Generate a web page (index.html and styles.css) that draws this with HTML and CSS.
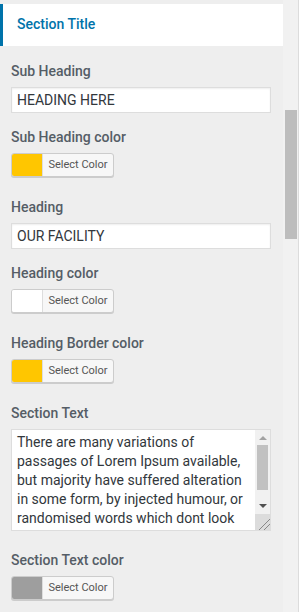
FILE: index.html
```html
<!DOCTYPE html>
<html lang="en">
<head>
    <meta charset="UTF-8">
    <meta name="viewport" content="width=device-width, initial-scale=1.0">
    <title>Section Settings</title>
    <link rel="stylesheet" href="styles.css">
</head>
<body>

    <div class="panel">
        <div class="section-head">
            <h3>Section Title</h3>
        </div>

        <div class="controls">
            <div class="field">
                <label>Sub Heading</label>
                <input type="text" class="text-input" value="HEADING HERE">
            </div>

            <div class="field color-field">
                <label>Sub Heading color</label>
                <button class="color-btn"><span class="swatch yellow"></span><span class="btn-text">Select Color</span></button>
            </div>

            <div class="field">
                <label>Heading</label>
                <input type="text" class="text-input" value="OUR FACILITY">
            </div>

            <div class="field color-field">
                <label>Heading color</label>
                <button class="color-btn"><span class="swatch white"></span><span class="btn-text">Select Color</span></button>
            </div>

            <div class="field color-field">
                <label>Heading Border color</label>
                <button class="color-btn"><span class="swatch yellow"></span><span class="btn-text">Select Color</span></button>
            </div>

            <div class="field area-field">
                <label>Section Text</label>
                <div class="textarea">
                    <div class="ta-text">There are many variations of passages of Lorem Ipsum available, but majority have suffered alteration in some form, by injected humour, or randomised words which dont look even slightly believable.</div>
                    <div class="ta-scroll">
                        <span class="arrow-up"></span>
                        <span class="ta-thumb"></span>
                        <span class="arrow-down"></span>
                        <span class="resizer"></span>
                    </div>
                </div>
            </div>

            <div class="field color-field">
                <label>Section Text color</label>
                <button class="color-btn"><span class="swatch grey"></span><span class="btn-text">Select Color</span></button>
            </div>
        </div>
    </div>

    <div class="page-scroll">
        <div class="page-thumb"></div>
    </div>

</body>
</html>
```

FILE: styles.css
```css
body {
    font-family: Roboto, "Liberation Sans", sans-serif;
    margin: 0;
    padding: 0;
    display: flex;
    height: 612px;
    overflow: hidden;
    background-color: #eeeeee;
}
.panel {
    width: 283px;
    flex-shrink: 0;
}
.section-head {
    margin-top: 4px;
    height: 42px;
    box-sizing: border-box;
    background-color: #ffffff;
    border-left: 3px solid #0073aa;
    padding: 11px 0 0 14px;
}
.section-head h3 {
    margin: 0;
    font-size: 14px;
    line-height: 18px;
    font-weight: 500;
    color: #0073aa;
}
.controls {
    padding: 16px 12px 0 11px;
}
.field {
    margin-bottom: 15px;
}
.field label {
    display: block;
    font-size: 14px;
    line-height: 18px;
    font-weight: 500;
    color: #555d66;
    margin-bottom: 7px;
}
.color-field {
    margin-bottom: 21px;
}
.area-field {
    margin-bottom: 20px;
}
.text-input {
    display: block;
    width: 100%;
    height: 26px;
    box-sizing: border-box;
    border: 1px solid #dddddd;
    box-shadow: inset 0 1px 2px rgba(0, 0, 0, 0.07);
    background-color: #ffffff;
    padding: 0 5px;
    margin: 0;
    font-family: Roboto, "Liberation Sans", sans-serif;
    font-size: 14px;
    color: #32373c;
    outline: none;
}
.color-btn {
    display: flex;
    height: 24px;
    padding: 0;
    margin: 0;
    border: 1px solid #cccccc;
    border-radius: 3px;
    background-color: #f7f7f7;
    box-shadow: 0 1px 0 #cccccc;
    overflow: hidden;
    cursor: pointer;
}
.swatch {
    width: 30px;
    height: 100%;
}
.swatch.yellow {
    background-color: #ffc600;
}
.swatch.white {
    background-color: #ffffff;
}
.swatch.grey {
    background-color: #9e9e9e;
}
.btn-text {
    width: 71px;
    height: 100%;
    box-sizing: border-box;
    border-left: 1px solid #dddddd;
    font-family: Roboto, "Liberation Sans", sans-serif;
    font-size: 11px;
    line-height: 22px;
    color: #555555;
    text-align: center;
}
.textarea {
    display: flex;
    height: 102px;
    box-sizing: border-box;
    border: 1px solid #dddddd;
    background-color: #ffffff;
}
.ta-text {
    flex: 1;
    overflow: hidden;
    padding: 3px 8px 0 5px;
    font-size: 14px;
    line-height: 19px;
    color: #32373c;
}
.ta-scroll {
    width: 15px;
    display: flex;
    flex-direction: column;
    align-items: center;
    background-color: #f1f1f1;
}
.arrow-up {
    margin-top: 6px;
    border-left: 4px solid transparent;
    border-right: 4px solid transparent;
    border-bottom: 4px solid #a3a3a3;
}
.ta-thumb {
    margin-top: 5px;
    width: 11px;
    height: 45px;
    background-color: #c1c1c1;
}
.arrow-down {
    margin-top: 14px;
    border-left: 4px solid transparent;
    border-right: 4px solid transparent;
    border-top: 4px solid #505050;
}
.resizer {
    margin-top: auto;
    width: 15px;
    height: 16px;
    background-color: #dcdcdc;
    background-image: linear-gradient(135deg, transparent 62%, #888888 62%, #888888 67%, transparent 67%, transparent 78%, #888888 78%, #888888 83%, transparent 83%);
}
.page-scroll {
    width: 15px;
    flex-shrink: 0;
    background-color: #f1f1f1;
    border-right: 1px solid #dcdcdc;
}
.page-thumb {
    margin: 110px 1px 0 2px;
    height: 129px;
    background-color: #bdbdbd;
}
```
